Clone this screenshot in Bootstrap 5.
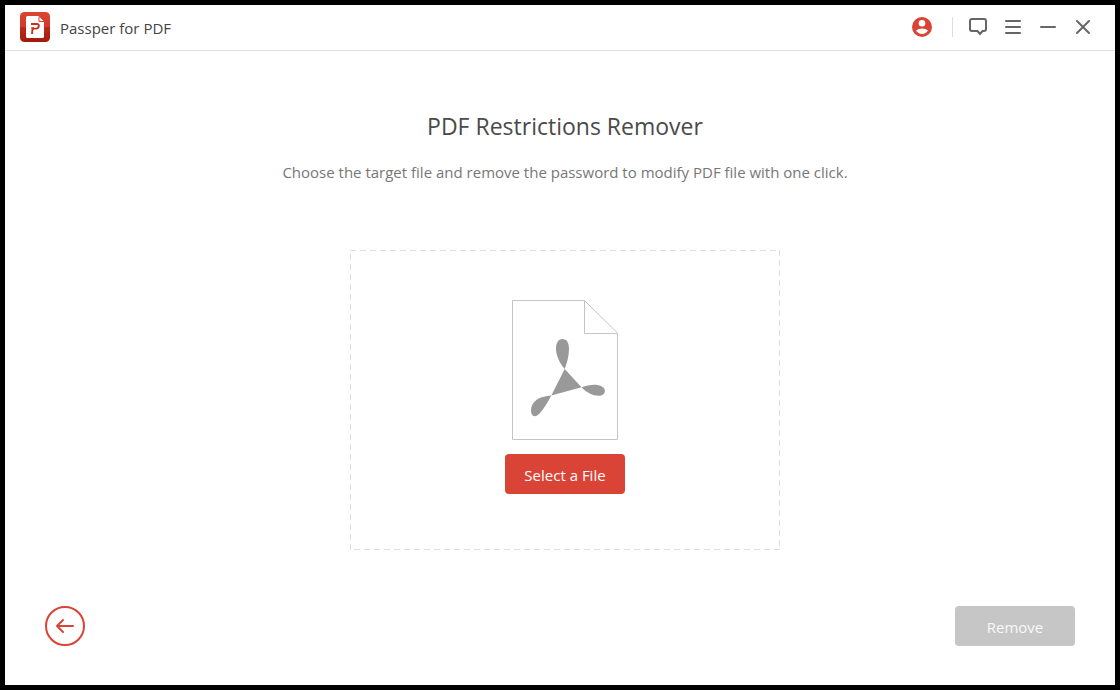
<!DOCTYPE html>
<html lang="en">
<head>
<meta charset="utf-8">
<meta name="viewport" content="width=device-width, initial-scale=1">
<title>Passper for PDF</title>
<link href="https://cdn.jsdelivr.net/npm/bootstrap@5.3.0/dist/css/bootstrap.min.css" rel="stylesheet">
<style>
  :root { --brand: #da4437; --line: #dedede; }
  body { background: #000; padding: 5px; font-family: "Open Sans", "Noto Sans", sans-serif; font-size: 15px; color: #444; }
  .app-window { min-height: calc(100vh - 10px); background: #fff; }
  .title-bar { height: 46px; border-bottom: 1px solid var(--line); padding: 0 22px 1px 15px; gap: 10px; }
  .app-name { font-size: 15px; line-height: 20px; padding-top: 2px; }
  .tool-btn { width: 20px; height: 20px; color: #666; }
  .tool-btn svg, .app-logo { display: block; }
  .tools { gap: 15px; }
  .tools .user { margin-right: 5px; }
  .tools .vr { width: 1px; height: 20px; background: #ddd; opacity: 1; }
  .intro { padding: 58px 0 0 10px; }
  .intro h1 { font-size: 23px; line-height: 34px; font-weight: 400; color: #4a4a4a; margin-bottom: 17px; }
  .intro p { font-size: 15px; line-height: 24px; color: #777; margin-bottom: 66px; }
  .drop-zone {
    width: 430px; height: 300px; max-width: 100%; padding-top: 50px; gap: 14px;
    background:
      repeating-linear-gradient(90deg, var(--line) 0 6px, transparent 6px 10px) top / 100% 1px no-repeat,
      repeating-linear-gradient(90deg, transparent 0 4px, var(--line) 4px 10px) bottom / 100% 1px no-repeat,
      repeating-linear-gradient(180deg, transparent 0 4px, var(--line) 4px 10px) left / 1px 100% no-repeat,
      repeating-linear-gradient(180deg, var(--line) 0 6px, transparent 6px 10px) right / 1px 100% no-repeat;
  }
  .action-btn { width: 120px; height: 40px; border: 0; border-radius: 4px; padding: 1px 0 0; font-size: 15px; line-height: 20px;
    --bs-btn-color: #fff; --bs-btn-bg: var(--brand); --bs-btn-hover-color: #fff; --bs-btn-hover-bg: #c93a2e;
    --bs-btn-disabled-color: #f8f8f8; --bs-btn-disabled-bg: #c6c6c6; --bs-btn-disabled-opacity: 1; }
  .back-btn { width: 40px; height: 40px; border: 2px solid var(--brand); color: var(--brand); }
  .action-bar { padding: 0 40px 39px; }
</style>
</head>
<body>
<div class="app-window d-flex flex-column">
  <header class="title-bar d-flex align-items-center">
    <svg class="app-logo" width="30" height="30" viewBox="0 0 30 30" aria-hidden="true">
      <defs><linearGradient id="logoShade" x1="0" y1="0" x2="0" y2="1"><stop offset="0" stop-color="#dc4432"/><stop offset=".49" stop-color="#d23b2a"/><stop offset=".5" stop-color="#bd2918"/><stop offset="1" stop-color="#a01b0d"/></linearGradient></defs>
      <rect width="30" height="30" rx="4.500" fill="url(#logoShade)"/>
      <path d="M7.500 4H18.500L24 9.500V24.500Q24 26 22.500 26H7.500Q6 26 6 24.500V5.500Q6 4 7.500 4Z" fill="#fff"/>
      <path d="M19 4.500V9.500H24M20.500 4.500L24 8" fill="none" stroke="#d4402f" stroke-width="1"/>
      <path d="M11 12H16.800Q19.300 12 18.800 14.300Q18.300 16.600 16 16.600H14Q12.600 16.600 12.400 18.200L12 22M11.300 16.200H14" fill="none" stroke="#c63220" stroke-width="1.900"/>
    </svg>
    <span class="app-name">Passper for PDF</span>
    <nav class="tools d-flex align-items-center ms-auto" aria-label="Window">
      <button type="button" class="tool-btn user btn p-0 border-0" aria-label="Account">
        <svg width="20" height="20" viewBox="0 0 20 20"><circle cx="10" cy="10" r="10" fill="#da4437"/><circle cx="10" cy="6.300" r="3.300" fill="#fff"/><path d="M4 13.600Q6.200 11.400 10 11.400T16 13.600Q13.900 17 10 17T4 13.600Z" fill="#fff"/></svg>
      </button>
      <div class="vr align-self-center"></div>
      <button type="button" class="tool-btn btn p-0 border-0" aria-label="Feedback">
        <svg width="20" height="20" viewBox="0 0 20 20" fill="none" stroke="currentColor" stroke-width="2"><path d="M4 2H16Q18 2 18 4V12Q18 14 16 14H14.500L12 17L9.500 14H4Q2 14 2 12V4Q2 2 4 2Z"/></svg>
      </button>
      <button type="button" class="tool-btn btn p-0 border-0" aria-label="Menu">
        <svg width="20" height="20" viewBox="0 0 20 20" stroke="currentColor" stroke-width="2" stroke-linecap="round"><path d="M3 4H17M3 10H17M3 16H17"/></svg>
      </button>
      <button type="button" class="tool-btn btn p-0 border-0" aria-label="Minimize">
        <svg width="20" height="20" viewBox="0 0 20 20" stroke="currentColor" stroke-width="2" stroke-linecap="round"><path d="M3 10H17"/></svg>
      </button>
      <button type="button" class="tool-btn btn p-0 border-0" aria-label="Close">
        <svg width="20" height="20" viewBox="0 0 20 20" stroke="currentColor" stroke-width="2" stroke-linecap="round"><path d="M4 4L16 16M16 4L4 16"/></svg>
      </button>
    </nav>
  </header>

  <main class="intro d-flex flex-column align-items-center text-center">
    <h1>PDF Restrictions Remover</h1>
    <p>Choose the target file and remove the password to modify PDF file with one click.</p>
    <section class="drop-zone d-flex flex-column align-items-center" aria-label="PDF file">
      <svg width="106" height="140" viewBox="0 0 106 140" aria-hidden="true">
        <path d="M72.500 .5H.5V139.500H105.500V33.500H72.500V.5L105.500 33" fill="none" stroke="#c4c4c4"/>
        <path fill="#999" d="M52.700 69C47 62 44 55 44 48.500C44 42 47 39 50.500 39C55 39 57 43 57 49C57 56 55 63 52.700 69L69.500 87.300C77 84.500 84 84 89 86C95 88.500 94 95.600 87 95.800C81 96 75 93 69.500 87.300L39.300 95.400C36 102 32 108 28 113C25 117 20 117.500 19.200 112.500C18.200 106 22 100 29 97.500C32.500 96.300 36 95.900 39.300 95.400L52.700 69Z"/>
      </svg>
      <button type="button" class="btn action-btn">Select a File</button>
    </section>
  </main>

  <footer class="action-bar d-flex justify-content-between align-items-center mt-auto">
    <button type="button" class="back-btn btn rounded-circle p-0 d-flex align-items-center justify-content-center" aria-label="Back">
      <svg width="20" height="16" viewBox="0 0 20 16" fill="none" stroke="currentColor" stroke-width="2" stroke-linecap="round" stroke-linejoin="round"><path d="M18 8H2M8 2L2 8L8 14"/></svg>
    </button>
    <button type="button" class="btn action-btn" disabled>Remove</button>
  </footer>
</div>
<script src="https://cdn.jsdelivr.net/npm/bootstrap@5.3.0/dist/js/bootstrap.bundle.min.js"></script>
</body>
</html>
